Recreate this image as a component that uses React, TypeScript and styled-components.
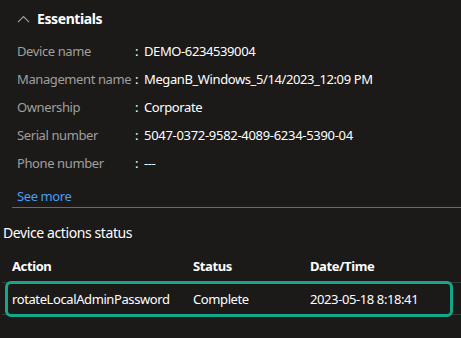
import React from "react";
import styled, { createGlobalStyle } from "styled-components";

const Global = createGlobalStyle`
  html, body { margin: 0; padding: 0; background: #1b1a19; }
  body { font-family: "Noto Sans", "Open Sans", sans-serif; color: #ffffff; }
  * { box-sizing: border-box; }
`;

const Page = styled.div`
  width: 461px;
  height: 338px;
  background: #1b1a19;
  overflow: hidden;
  letter-spacing: -0.4px;
`;

const Essentials = styled.section`
  padding-left: 17px;
`;

const Header = styled.div`
  display: flex;
  align-items: center;
  gap: 7px;
  padding-top: 9px;
  height: 29px;
  font-size: 14px;
  font-weight: 700;
  line-height: 20px;
  color: #ffffff;
`;

const Rows = styled.div`
  margin-top: 8px;
  display: grid;
  grid-template-columns: 118px 9px 1fr;
  grid-auto-rows: 28px;
  align-items: center;
  font-size: 13px;
`;

const Label = styled.div`
  color: #a19f9d;
  white-space: nowrap;
`;

const Colon = styled.div`
  color: #ffffff;
`;

const Value = styled.div<{ $digits?: boolean }>`
  color: #ffffff;
  white-space: nowrap;
  letter-spacing: ${(p) => (p.$digits ? "-0.3px" : "-0.4px")};
`;

const SeeMore = styled.a`
  display: block;
  margin-top: 10px;
  height: 18px;
  line-height: 18px;
  font-size: 13px;
  color: #479ef5;
  text-decoration: none;
`;

const Divider = styled.hr`
  margin: 2px 0 0 -5px;
  border: none;
  height: 1px;
  background: #6b6a69;
`;

const Title = styled.h2`
  margin: 15px 0 0 3px;
  font-size: 14px;
  font-weight: 400;
  line-height: 20px;
  color: #ffffff;
`;

const Table = styled.div`
  margin: 9px 0 0 2px;
  font-size: 13px;
`;

const HeadRow = styled.div`
  display: grid;
  grid-template-columns: 181px 117px 1fr;
  padding: 4px 0 0 10px;
  height: 30px;
  line-height: 18px;
  font-weight: 700;
  color: #ffffff;
`;

const DataRow = styled.div<{ $selected?: boolean }>`
  position: relative;
  display: grid;
  grid-template-columns: 181px 117px 1fr;
  padding-left: 10px;
  height: 33px;
  align-items: center;
  border-top: 1px solid #3b3a39;
  border-bottom: 1px solid #3b3a39;
  color: #ffffff;
  &::after {
    content: "";
    display: ${(p) => (p.$selected ? "block" : "none")};
    position: absolute;
    left: 3px;
    right: 8px;
    top: -2px;
    bottom: -3px;
    border: 3px solid #14a88a;
    border-radius: 6px;
    pointer-events: none;
  }
`;

const Cell = styled.div`
  white-space: nowrap;
  padding-top: 1px;
`;

const Chevron = () => (
  <svg width="13" height="8" viewBox="0 0 13 8" fill="none">
    <path d="M1 7.2 L6.5 1.5 L12 7.2" stroke="#a19f9d" strokeWidth="1.2" />
  </svg>
);

const items: [string, string, boolean][] = [
  ["Device name", "DEMO-6234539004", false],
  ["Management name", "MeganB_Windows_5/14/2023_12:09 PM", false],
  ["Ownership", "Corporate", false],
  ["Serial number", "5047-0372-9582-4089-6234-5390-04", true],
  ["Phone number", "---", false],
];

export default function App() {
  return (
    <Page>
      <Global />
      <Essentials>
        <Header>
          <Chevron />
          <span>Essentials</span>
        </Header>
        <Rows>
          {items.map(([l, v, d]) => (
            <React.Fragment key={l}>
              <Label>{l}</Label>
              <Colon>:</Colon>
              <Value $digits={d}>{v}</Value>
            </React.Fragment>
          ))}
        </Rows>
        <SeeMore href="#">See more</SeeMore>
        <Divider />
      </Essentials>
      <Title>Device actions status</Title>
      <Table>
        <HeadRow>
          <Cell>Action</Cell>
          <Cell>Status</Cell>
          <Cell>Date/Time</Cell>
        </HeadRow>
        <DataRow $selected>
          <Cell>rotateLocalAdminPassword</Cell>
          <Cell>Complete</Cell>
          <Cell>2023-05-18 8:18:41</Cell>
        </DataRow>
      </Table>
    </Page>
  );
}
